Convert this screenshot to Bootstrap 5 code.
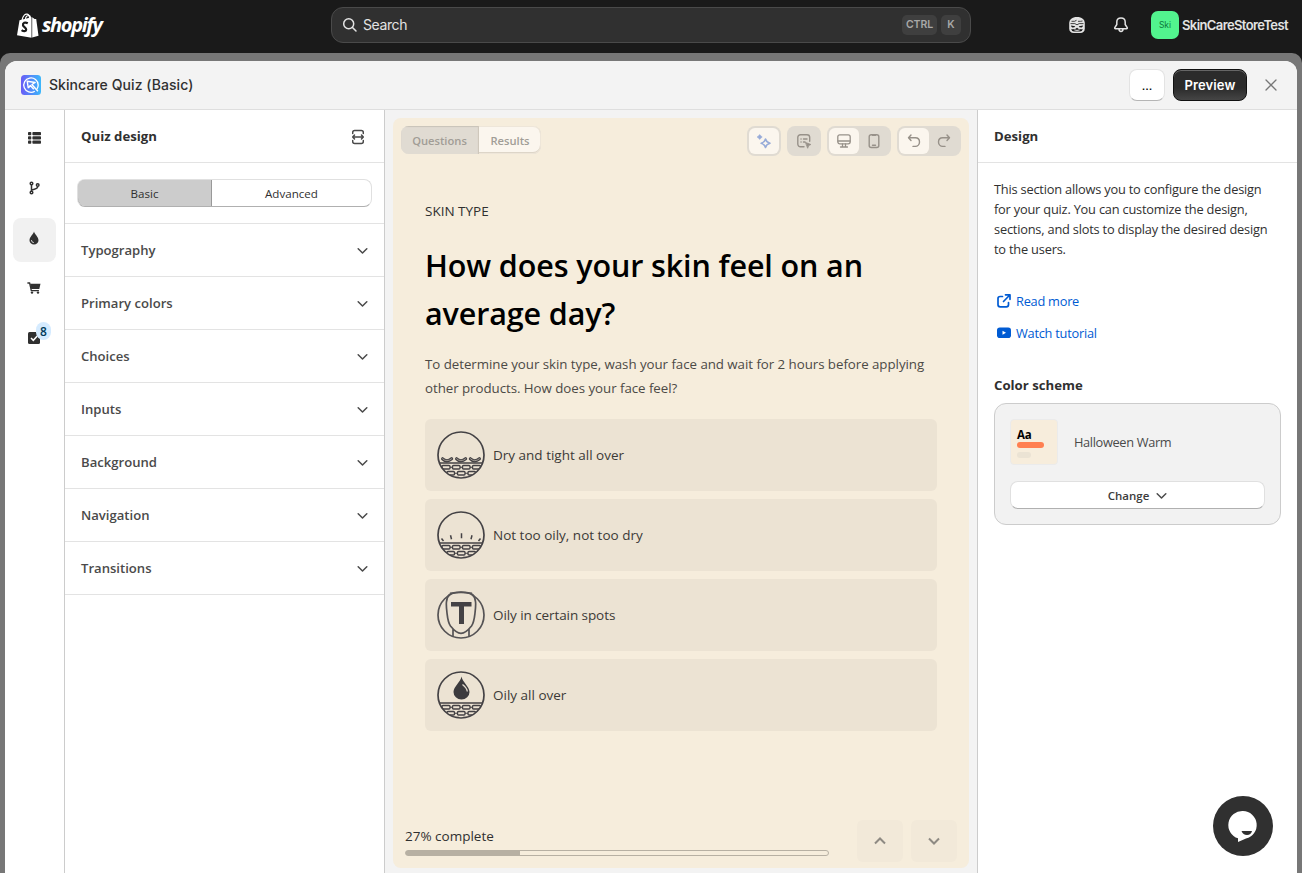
<!DOCTYPE html>
<html lang="en">
<head>
<meta charset="utf-8">
<meta name="viewport" content="width=device-width, initial-scale=1">
<title>Skincare Quiz (Basic)</title>
<link href="https://cdn.jsdelivr.net/npm/bootstrap@5.3.0/dist/css/bootstrap.min.css" rel="stylesheet">
<style>
  body { font-family: "Open Sans", "Noto Sans", sans-serif; font-size: 13.5px; line-height: 20px; color: #303030; background: #1a1a1a; height: 100vh; overflow: hidden; }
  svg { display: block; flex: none; }
  .ui-inter { font-family: Inter, sans-serif; }
  .topbar { height: 53px; color: #e3e3e3; display: grid; grid-template-columns: 331px 640px 1fr; }
  .brand-word { font: italic 700 20px/26px "Open Sans", sans-serif; color: #fff; letter-spacing: -1.35px; padding-top: 4px; margin-left: 3px; }
  .searchbox { height: 36px; margin-top: 7px; background: #303030; border: 1px solid #4a4a4a; border-radius: 12px; padding: 0 9px 0 10px; font-size: 14px; letter-spacing: -.4px; }
  .keycap { background: #3f3f3f; border-radius: 5px; height: 20px; font-size: 10.5px; font-weight: 600; letter-spacing: -.1px; color: #a8a8a8; padding: 0 4px; }
  .store-tile { width: 28px; height: 28px; border-radius: 7px; background: #52f48e; color: #0d7a3c; font-size: 8.500px; }
  .store-name { font-size: 13px; font-weight: 600; letter-spacing: -.6px; margin-left: 3px; }
  .backdrop { background: #777; height: 820px; border-radius: 10px 10px 0 0; padding: 8px 5px 0; }
  .shell { background: #fff; border-radius: 12px 12px 0 0; overflow: hidden; height: 812px; }
  .shell-head { height: 49px; background: #f3f3f3; border-bottom: 1px solid #dedede; padding: 0 20px 0 16px; }
  .shell-title { font-size: 14px; font-weight: 500; letter-spacing: .07px; }
  .btn-more { width: 36px; height: 32px; background: #fff; border-radius: 8px; border: 1px solid #e3e3e3; border-bottom-color: #b5b5b5; line-height: 30px; }
  .btn-preview { width: 74px; height: 32px; border-radius: 8px; border: 1px solid #111; background: linear-gradient(#2b2b2b 60%, #454545); box-shadow: inset 0 1px 0 #666; color: #fff; font-size: 13px; font-weight: 600; letter-spacing: .1px; }
  .shell-body { height: 763px; }
  .rail { width: 60px; border-right: 1px solid #ccc; padding: 8px 0 0 8px; }
  .rail-item { width: 43px; height: 44px; margin-bottom: 6px; border-radius: 8px; padding: 0 1px 4px 0; }
  .rail-item.is-on { background: #f1f1f1; }
  .count-dot { position: absolute; left: 23px; top: 4px; width: 15px; height: 18px; border-radius: 8px; background: #d5ebff; color: #003a5a; font-size: 12px; font-weight: 600; line-height: 19px; text-align: center; }
  .side { width: 320px; border-right: 1px solid #ccc; }
  .aside-right { width: 319px; font-size: 12.800px; letter-spacing: -.2px; }
  .pane-head { height: 53px; border-bottom: 1px solid #e3e3e3; padding: 0 18px 0 16px; }
  .pane-title { font-size: 13.2px; font-weight: 700; letter-spacing: 0; }
  .seg-wrap { height: 61px; border-bottom: 1px solid #e3e3e3; padding: 16px 12px; }
  .seg { height: 28px; border-radius: 8px; border: 1px solid #e0e0e0; border-bottom-color: #b0b0b0; overflow: hidden; font-size: 11.600px; font-weight: 500; }
  .seg-on { width: 135px; background: #ccc; border: solid #999; border-width: 1px 1px 0 1px; margin: -1px 0 0 -1px; border-radius: 8px 0 0 8px; }
  .acc-row { height: 53px; border-bottom: 1px solid #e3e3e3; padding: 0 16px; font-size: 13.1px; font-weight: 600; color: #4a4a4a; }
  .stage { width: 593px; background: #f3f3f3; border-right: 1px solid #ccc; padding: 8px; }
  .quiz { height: 750px; width: 576px; background: #f6eddc; border-radius: 8px; padding: 8px 8px 0; }
  .quiz-tabs { height: 28px; width: 140px; border-radius: 8px; overflow: hidden; font-size: 11.200px; font-weight: 600; color: #a19d96; background: #fbf6ee; box-shadow: inset 0 0 0 1px #eee6d9, inset 0 -1px 0 1px #ddd5c8; }
  .quiz-tabs span { padding-top: 2px; }
  .quiz-tabs .tab-on { width: 78px; background: #e0dbd2; box-shadow: inset 0 1px 1px #c8c2b8; border-right: 1px solid #cfc8bc; }
  .tool-box { height: 30px; border-radius: 8px; padding: 2px; background: #e0dbd2; color: #979189; }
  .tool { width: 30px; height: 26px; border-radius: 6px; }
  .tool.lit { background: #fbf6ee; }
  .quiz-body { padding: 0 24px; }
  .kicker { margin-top: 45px; line-height: 20px; }
  .question { margin: 20px 0 0; font-size: 30.500px; letter-spacing: -.12px; line-height: 48px; font-weight: 600; color: #000; }
  .explain { margin: 15px 0 0; font-size: 13.300px; letter-spacing: -.04px; line-height: 24px; color: #4c4a46; }
  .answers { margin-top: 19px; gap: 8px; }
  .answer { height: 72px; border-radius: 6px; background: #ece3d3; padding: 0 12px; gap: 8px; color: #3c3a37; }
  .answer svg { width: 48px; height: 48px; }
  .quiz-foot { margin-top: 89px; padding: 0 4px; }
  .meter { width: 424px; height: 6px; border: 1px solid #b7b0a3; border-radius: 3px; margin-top: 4px; }
  .meter > div { background: #b7b0a3; height: 100%; }
  .step { width: 46px; height: 42px; border-radius: 6px; background: #f2e9d9; color: #8e8a83; }
  .doc-link { color: #005bd3; text-decoration: none; height: 20px; gap: 4px; padding-left: 2px; letter-spacing: -.25px; }
  .scheme { width: 287px; height: 122px; background: #f2f2f2; border: 1px solid #ccc; border-radius: 12px; padding: 15px; margin-top: 8px; }
  .scheme-name { letter-spacing: -.35px; color: #4a4a4a; }
  .swatch { width: 48px; height: 46px; background: #f7eddc; border: 1px solid #ebebeb; border-radius: 4px; padding: 6px; color: #000; font-weight: 700; font-size: 11.500px; line-height: 18px; }
  .bar-a { width: 27px; height: 6px; border-radius: 3px; background: #ff7f50; margin-top: -2px; }
  .bar-b { width: 14px; height: 6px; border-radius: 3px; background: #ebe3d4; margin-top: 4px; }
  .btn-change { height: 28px; width: 255px; border-radius: 8px; border: 1px solid #e0e0e0; border-bottom-color: #b0b0b0; background: #fff; color: #3c3c3c; font-size: 11.500px; font-weight: 600; letter-spacing: 0; margin-top: 16px; gap: 7px; }
  .chat { position: absolute; left: 1213px; top: 796px; }
</style>
</head>
<body>
<svg width="0" height="0" class="position-absolute">
  <defs>
    <clipPath id="disc"><circle cx="24" cy="24" r="23"/></clipPath>
    <g id="ground" fill="none" stroke="#444245" stroke-width="1.4">
      <path d="M2.500 32h43"/>
      <g clip-path="url(#disc)">
        <rect x="5" y="34.500" width="8" height="3.500" rx="1"/><rect x="15.500" y="34.500" width="7.500" height="3.500" rx="1"/><rect x="25.500" y="34.500" width="7.500" height="3.500" rx="1"/><rect x="35.500" y="34.500" width="8" height="3.500" rx="1"/>
        <rect x="10" y="40.500" width="7.500" height="3.500" rx="1"/><rect x="20.500" y="40.500" width="7.500" height="3.500" rx="1"/><rect x="31" y="40.500" width="7.500" height="3.500" rx="1"/>
        <path d="M13 36.300h2.500M23 36.300h2.500M33 36.300h2.500M17.500 42.300h3M28 42.300h3M6 40.500h2M40.500 40.500h2M15 46.300h7M26 46.300h7" stroke-width="1.100"/>
      </g>
      <circle cx="24" cy="24" r="23" stroke-width="1.700"/>
    </g>
    <path id="flake" d="M.8.800q4.200 4 9 0" stroke-linecap="round" fill="none"/>
    <path id="chev" d="M1.200 1.800l4.300 4.200L9.800 1.800" fill="none" stroke="#4a4a4a" stroke-width="1.500" stroke-linecap="round" stroke-linejoin="round"/>
  </defs>
</svg>

<header class="topbar ui-inter">
  <div class="d-flex align-items-center" style="padding:0 0 3px 17px">
    <svg width="22" height="25" viewBox="0 0 22 25"><path fill="#fff" d="M2.500 7.200L14.500 4.200V24.800L0 22.200zM15.200 4.200L17.600 5.900 19.200 6 21.500 22.800 15.200 24.600z"/><path d="M5 7.300C6 2 8.500.8 10.200 1.200 12 1.700 12.600 3.500 12.800 5.500M8.300 6.500C8.700 3.500 10.500 2 12 2.400c1 .3 1.500 1.500 1.700 2.600" fill="none" stroke="#fff" stroke-width="1.200"/><path d="M10.800 10.200C8 8.800 5.600 10 6 12.200c.3 1.800 3.300 2.300 3.200 4.500-.1 1.900-2.600 1.900-4.600.4" fill="none" stroke="#1a1a1a" stroke-width="2.200"/></svg>
    <span class="brand-word pb-1">shopify</span>
  </div>
  <div class="searchbox d-flex align-items-center">
    <svg width="16" height="16" viewBox="0 0 16 16" fill="none" stroke="#e3e3e3" stroke-width="1.500" stroke-linecap="round"><circle cx="6.700" cy="6.700" r="5"/><path d="M10.500 10.500L14 14"/></svg>
    <span class="flex-grow-1" style="margin-left:5px">Search</span>
    <span class="keycap d-flex align-items-center">CTRL</span>
    <span class="keycap d-flex align-items-center justify-content-center ms-1" style="width:20px">K</span>
  </div>
  <div class="d-flex align-items-center" style="padding:0 0 3px 97px">
    <svg width="18" height="18" viewBox="0 0 18 18"><path d="M1.200 7C1.500 3.500 4 1 9 1s7.500 2.500 7.800 6v5.500c0 2.800-1.800 4.500-4.500 4.500H5.700c-2.700 0-4.500-1.700-4.500-4.500z" fill="#e3e3e3"/><path d="M3.500 5.300Q7 5.800 8.500 4.300M10 5.300q2.500.2 4.500-.3M2.500 7.600h4.300L9 8.800l2.200-1.200h4.300" fill="none" stroke="#1a1a1a" stroke-width=".8"/><path d="M3 9.400l4.200.9c-.8 1.700-3.900 1.700-4.200-.9zM15 9.400l-4.200.9c.8 1.700 3.900 1.700 4.200-.9zM3.200 13Q6.500 14 9 11.800q2.500 2.200 5.800 1.200-.6 2.500-2.800 2.500H6Q3.800 15.500 3.200 13z" fill="#1a1a1a"/><path d="M6.300 13.900q2.700 1 5.400 0" stroke="#e3e3e3" fill="none"/></svg>
    <svg width="18" height="18" viewBox="0 0 18 18" style="margin-left:26px" fill="none" stroke="#e3e3e3" stroke-width="1.500" stroke-linejoin="round"><path d="M9 2C6.300 2 4.800 3.800 4.800 6v2.500L2.800 11.700c-.3.600 0 1.100.6 1.100h11.200c.6 0 .9-.5.6-1.100L13.200 8.500V6C13.200 3.800 11.700 2 9 2zM7 13c0 1.500.8 2.400 2 2.400s2-.9 2-2.400"/></svg>
    <span class="store-tile d-flex align-items-center justify-content-center" style="margin-left:21px">Ski</span>
    <span class="store-name">SkinCareStoreTest</span>
  </div>
</header>

<div class="backdrop">
 <main class="shell">
  <div class="shell-head d-flex align-items-center">
    <svg width="20" height="20" viewBox="0 0 20 20"><defs><linearGradient id="lg"><stop stop-color="#6a5cf6"/><stop offset="1" stop-color="#3cb8fb"/></linearGradient></defs><rect width="20" height="20" rx="3.500" fill="url(#lg)"/><path d="M13.800 16.200A7.200 7.200 0 1 1 17.200 10c0 1.700-.5 3-1.300 4.100" fill="none" stroke="#fff" stroke-width="1.300"/><path d="M7.300 13.200L6.200 6.200l8 1.300-3.300 2 6 6.800M7.300 13.200l2-2.700 3.500 3.800" fill="none" stroke="#fff" stroke-width="1.400" stroke-linejoin="round"/></svg>
    <span class="shell-title ui-inter ms-2 me-auto">Skincare Quiz (Basic)</span>
    <button class="btn-more p-0 me-2">...</button>
    <button class="btn-preview ui-inter p-0">Preview</button>
    <svg width="12" height="12" viewBox="0 0 12 12" style="margin-left:18px" stroke="#777" stroke-width="1.300" stroke-linecap="round"><path d="M1 1l10 10M11 1L1 11"/></svg>
  </div>

  <div class="shell-body d-flex">
    <nav class="rail flex-shrink-0">
      <div class="rail-item d-flex align-items-center justify-content-center"><svg width="13" height="12" viewBox="0 0 13 12" fill="#303030"><rect width="3.300" height="3.200" rx=".8"/><rect x="4.400" width="8.600" height="3.200" rx=".8"/><rect y="4.300" width="3.300" height="3.200" rx=".8"/><rect x="4.400" y="4.300" width="8.600" height="3.200" rx=".8"/><rect y="8.600" width="3.300" height="3.200" rx=".8"/><rect x="4.400" y="8.600" width="8.600" height="3.200" rx=".8"/></svg></div>
      <div class="rail-item d-flex align-items-center justify-content-center"><svg width="11" height="14" viewBox="0 0 11 14" fill="none" stroke="#303030" stroke-width="1.500"><circle cx="2.500" cy="2.500" r="1.300"/><circle cx="2.500" cy="11.500" r="1.300"/><circle cx="8.700" cy="4" r="1.300"/><path d="M2.500 4v6M8.700 5.500C8.700 8 6.500 8 2.800 9"/></svg></div>
      <div class="rail-item is-on d-flex align-items-center justify-content-center"><svg width="10" height="14" viewBox="0 0 10 14"><path d="M5 .5C5.500 3 9.500 6 9.500 9.200a4.500 4.300 0 0 1-9 0C.5 6 4.500 3 5 .5z" fill="#303030"/><path d="M2.500 9.200c0 1.300.9 2.200 2.200 2.300" stroke="#eee" fill="none"/></svg></div>
      <div class="rail-item d-flex align-items-center justify-content-center"><svg width="14" height="12" viewBox="0 0 14 12"><path d="M.4 1h2.200l1.700 7.600h7.600" fill="none" stroke="#303030" stroke-width="1.300"/><path d="M3 1.700h10.500L12.300 7H4.200z" fill="#303030"/><circle cx="5" cy="10.600" r="1.200" fill="#303030"/><circle cx="11" cy="10.600" r="1.200" fill="#303030"/></svg></div>
      <div class="rail-item d-flex align-items-center justify-content-center position-relative"><svg width="12" height="12" viewBox="0 0 12 12"><rect width="12" height="12" rx="1.500" fill="#303030"/><path d="M3 6l2.300 2.300L9.300 4" fill="none" stroke="#fff" stroke-width="1.500"/></svg><span class="count-dot">8</span></div>
    </nav>

    <section class="side flex-shrink-0">
      <div class="pane-head d-flex align-items-center justify-content-between"><span class="pane-title">Quiz design</span>
        <svg width="16" height="16" viewBox="0 0 16 16" style="margin-top:1px" fill="none" stroke="#4a4a4a" stroke-width="1.500" stroke-linecap="round" stroke-linejoin="round"><path d="M2.700 4.500V3.500c0-1.200.8-2 2-2h6.600c1.200 0 2 .8 2 2v1M2.700 11.500v1c0 1.200.8 2 2 2h6.600c1.200 0 2-.8 2-2v-1M3 8h10M4.500 6L2.700 8l1.800 2M11.500 6l1.800 2-1.800 2"/></svg></div>
      <div class="seg-wrap"><div class="seg d-flex"><div class="seg-on d-flex align-items-center justify-content-center flex-shrink-0"><span style="padding-top:2px">Basic</span></div><div class="flex-grow-1 d-flex align-items-center justify-content-center"><span style="padding-top:2px">Advanced</span></div></div></div>
      <div class="acc-row d-flex align-items-center justify-content-between"><span>Typography</span><svg width="11" height="7"><use href="#chev"/></svg></div>
      <div class="acc-row d-flex align-items-center justify-content-between"><span>Primary colors</span><svg width="11" height="7"><use href="#chev"/></svg></div>
      <div class="acc-row d-flex align-items-center justify-content-between"><span>Choices</span><svg width="11" height="7"><use href="#chev"/></svg></div>
      <div class="acc-row d-flex align-items-center justify-content-between"><span>Inputs</span><svg width="11" height="7"><use href="#chev"/></svg></div>
      <div class="acc-row d-flex align-items-center justify-content-between"><span>Background</span><svg width="11" height="7"><use href="#chev"/></svg></div>
      <div class="acc-row d-flex align-items-center justify-content-between"><span>Navigation</span><svg width="11" height="7"><use href="#chev"/></svg></div>
      <div class="acc-row d-flex align-items-center justify-content-between"><span>Transitions</span><svg width="11" height="7"><use href="#chev"/></svg></div>
    </section>

    <section class="stage flex-shrink-0">
      <div class="quiz">
        <div class="d-flex align-items-start" style="gap:6px">
          <div class="quiz-tabs d-flex me-auto"><div class="tab-on d-flex align-items-center justify-content-center"><span>Questions</span></div><div class="flex-grow-1 d-flex align-items-center justify-content-center"><span>Results</span></div></div>
          <div class="tool-box d-flex"><div class="tool lit d-flex align-items-center justify-content-center"><svg width="16" height="16" viewBox="0 0 16 16"><path d="M3.700 1.500L5 3 6.300 4 5 5 3.700 6.500 2.500 5 1 4l1.500-1z" fill="#97abd8" stroke="#97abd8" stroke-width=".5"/><path d="M9.500 6q.8 3.200 4.500 4.300-3.700 1-4.500 4.200-.8-3.200-4.300-4.200Q8.700 9.200 9.500 6z" fill="none" stroke="#97abd8" stroke-width="1.600" stroke-linejoin="round"/></svg></div></div>
          <div class="tool-box d-flex"><div class="tool d-flex align-items-center justify-content-center"><svg width="16" height="16" viewBox="0 0 16 16" fill="none" stroke="currentColor" stroke-width="1.400" stroke-linecap="round"><path d="M8 13.700H4.500c-1.600 0-2.700-1.100-2.700-2.700V4.500c0-1.600 1.100-2.700 2.700-2.700h6.500c1.600 0 2.700 1.100 2.700 2.700v3.700M5 6h.1M7.500 6H11M5 9h.1M7.500 9H9"/><path d="M9.700 9.500l5.200 2-2.200 1-.9 2.400z" fill="currentColor" stroke-width=".8"/></svg></div></div>
          <div class="tool-box d-flex"><div class="tool lit d-flex align-items-center justify-content-center"><svg width="16" height="16" viewBox="0 0 16 16" fill="none" stroke="currentColor" stroke-width="1.300" stroke-linecap="round"><rect x="1.800" y="1.800" width="12.400" height="9" rx="2"/><path d="M2 8h12M6.500 11v2.500M9.500 11v2.500M4.500 14h7"/></svg></div><div class="tool d-flex align-items-center justify-content-center"><svg width="16" height="16" viewBox="0 0 16 16" fill="none" stroke="currentColor" stroke-width="1.400" stroke-linecap="round"><rect x="3.200" y="1.700" width="9.600" height="12.800" rx="2"/><path d="M6.500 12.300h3M6.500 2.300h3"/></svg></div></div>
          <div class="tool-box d-flex"><div class="tool lit d-flex align-items-center justify-content-center"><svg width="16" height="16" viewBox="0 0 16 16" fill="none" stroke="currentColor" stroke-width="1.400" stroke-linecap="round" stroke-linejoin="round"><path d="M5 2L2.500 4.800 5 7.500M2.800 4.800h6.500c2.700 0 4.200 2 4.200 4.300s-1.800 4.300-4.200 4.300H7"/></svg></div><div class="tool d-flex align-items-center justify-content-center"><svg width="16" height="16" viewBox="0 0 16 16" fill="none" stroke="currentColor" stroke-width="1.400" stroke-linecap="round" stroke-linejoin="round"><path d="M11 2l2.500 2.800L11 7.500M13.200 4.800H6.700c-2.700 0-4.200 2-4.200 4.300s1.800 4.300 4.200 4.300H9"/></svg></div></div>
        </div>
        <div class="quiz-body">
          <div class="kicker">SKIN TYPE</div>
          <h1 class="question">How does your skin feel on an<br>average day?</h1>
          <p class="explain text-nowrap">To determine your skin type, wash your face and wait for 2 hours before applying<br>other products. How does your face feel?</p>
          <div class="answers d-flex flex-column">
            <div class="answer d-flex align-items-center"><svg viewBox="0 0 48 48"><use href="#ground"/><g stroke="#444245" stroke-width="3.200"><use href="#flake" x="4.800" y="27"/><use href="#flake" x="18.800" y="27"/><use href="#flake" x="32.600" y="27"/></g><g stroke="#b5ada3" stroke-width=".8"><use href="#flake" x="4.800" y="27"/><use href="#flake" x="18.800" y="27"/><use href="#flake" x="32.600" y="27"/></g></svg><span>Dry and tight all over</span></div>
            <div class="answer d-flex align-items-center"><svg viewBox="0 0 48 48"><use href="#ground"/><path d="M4.500 27.500l2 2.500M13.500 24.300l1 4M24.500 22.200v5M35 24.300l-1 4M43.500 27.500l-2 2.500" stroke="#444245" stroke-width="1.500"/></svg><span>Not too oily, not too dry</span></div>
            <div class="answer d-flex align-items-center"><svg viewBox="0 0 48 48" fill="none" stroke="#555355" stroke-width="1.700"><circle cx="24" cy="24" r="23"/><path d="M13 3C8.500 7 9 14 10 22c.7 6 1 9.500 3.500 13 3 3.800 7 7.300 10.500 7.300s7.500-3.500 10.500-7.300C37 31.500 37.300 28 38 22c1-8 1.500-15-3-19M16 38v8M32 38v8M13 2.300q11-2 22 0"/><path d="M14 11h20.500v4.500H27V33h-5V15.500h-8z" fill="#444245" stroke="none"/></svg><span style="letter-spacing:-.08px">Oily in certain spots</span></div>
            <div class="answer d-flex align-items-center"><svg viewBox="0 0 48 48"><use href="#ground"/><path d="M24.500 5.500c.8 5.500 8 10 8 15.500a8 7.500 0 0 1-16 0c0-5.500 7.200-10 8-15.500z" fill="#3c3b3e"/><path d="M25.500 13.500q4.500 3.500 4.800 7" stroke="#e5ddd0" fill="none" stroke-width="1.300"/></svg><span>Oily all over</span></div>
          </div>
        </div>
        <div class="quiz-foot d-flex align-items-start">
          <div class="me-auto" style="padding-top:6px">27% complete<div class="meter"><div style="width:27%"></div></div></div>
          <div class="d-flex gap-2"><div class="step d-flex align-items-center justify-content-center"><svg width="12" height="8" viewBox="0 0 12 8" fill="none" stroke="currentColor" stroke-width="2"><path d="M1 6.500l5-5 5 5"/></svg></div><div class="step d-flex align-items-center justify-content-center"><svg width="12" height="8" viewBox="0 0 12 8" fill="none" stroke="currentColor" stroke-width="2"><path d="M1 1.500l5 5 5-5"/></svg></div></div>
        </div>
      </div>
    </section>

    <aside class="aside-right flex-shrink-0">
      <div class="pane-head d-flex align-items-center"><span class="pane-title">Design</span></div>
      <div class="px-3" style="padding-top:16px">
        <div class="text-nowrap">This section allows you to configure the design<br>for your quiz. You can customize the design,<br>sections, and slots to display the desired design<br>to the users.</div>
        <a href="#" class="doc-link d-flex align-items-center" style="margin-top:32px"><svg width="16" height="16" viewBox="0 0 16 16" fill="none" stroke="currentColor" stroke-width="1.700" stroke-linecap="round" stroke-linejoin="round"><path d="M6.500 3.500H4.200C3 3.500 2 4.300 2 5.500v6.300c0 1.200 1 2 2.200 2h6.100c1.200 0 2.200-.8 2.200-2V9.500M9.500 1.800H14v4.500M13.800 2L7.500 8.500"/></svg><span>Read more</span></a>
        <a href="#" class="doc-link d-flex align-items-center" style="margin-top:12px"><svg width="16" height="16" viewBox="0 0 16 16"><rect x="1" y="2.500" width="14" height="10.500" rx="2.800" fill="#005bd3"/><path d="M6.500 5.700v4l3.500-2z" fill="#fff"/></svg><span>Watch tutorial</span></a>
        <div class="pane-title" style="margin-top:32px">Color scheme</div>
        <div class="scheme">
          <div class="d-flex align-items-center gap-3"><div class="swatch"><span>Aa</span><div class="bar-a"></div><div class="bar-b"></div></div><span class="scheme-name">Halloween Warm</span></div>
          <button class="btn-change d-flex align-items-center justify-content-center p-0"><span style="padding-top:2px">Change</span><svg width="11" height="7"><use href="#chev"/></svg></button>
        </div>
      </div>
    </aside>
  </div>
 </main>
</div>
<svg class="chat" width="60" height="60" viewBox="0 0 60 60"><circle cx="30" cy="30" r="30" fill="#303030"/><path d="M30 15a14 14 0 0 1 3 27.600Q29 44.500 25 46V42.300A14 14 0 0 1 30 15z" fill="#fff"/><path d="M28.500 35h10.500q-1 4-5 4t-5.500-4z" fill="#303030"/></svg>
<script src="https://cdn.jsdelivr.net/npm/bootstrap@5.3.0/dist/js/bootstrap.bundle.min.js"></script>
</body>
</html>
